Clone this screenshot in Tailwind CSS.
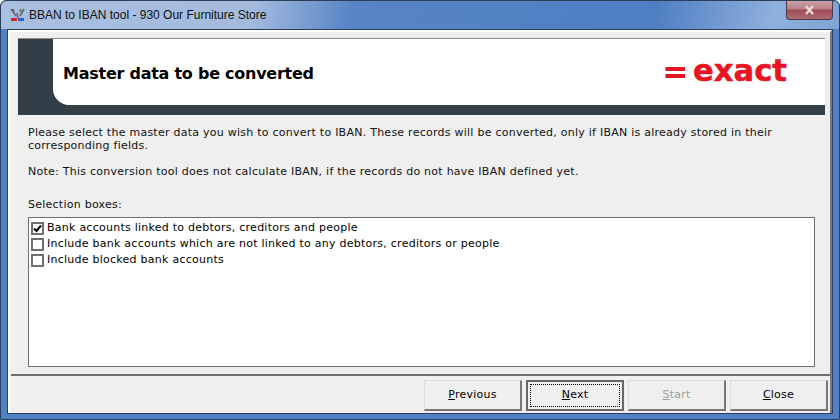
<!DOCTYPE html>
<html lang="en">
<head>
    <meta charset="UTF-8">
    <title>BBAN to IBAN tool</title>
    <script src="https://cdn.jsdelivr.net/npm/@tailwindcss/browser@4"></script>
</head>
<body class="w-[840px] h-[420px] overflow-hidden bg-white font-['DejaVu_Sans',sans-serif] text-[11px] tracking-[0.25px] text-black">
    <!-- Window frame -->
    <div class="relative w-[840px] h-[420px] flex flex-col rounded-t-[6px] border border-[#2c3e5c] bg-[#5180c4]">
        <!-- Title bar -->
        <div class="h-[28px] flex items-center pl-[9px] rounded-t-[6px] bg-[linear-gradient(100deg,#a9bfe0_0%,#a4bbde_30%,#5684c6_42%,#4f7fc3_78%,#8fb0dc_92%,#7ea3d6_100%)]">
            <svg width="15" height="14" viewBox="0 0 15 14" class="shrink-0">
                <path d="M1 1l5 7M3 1l1 3M14 1l-4 7M11 1l-1 3M7 5l1 5" stroke="#666" stroke-width="1.6" fill="none"/>
                <rect x="1" y="10" width="6" height="3" fill="#d8212a"/>
                <rect x="8" y="10" width="6" height="3" fill="#2a62c8"/>
            </svg>
            <span class="ml-[4px] text-[12px] font-['Liberation_Sans',sans-serif] tracking-normal text-[#111]">BBAN to IBAN tool - 930 Our Furniture Store</span>
        </div>
        <!-- Close button -->
        <div class="absolute top-0 right-[6px] w-[47px] h-[19px] rounded-b-[4px] border border-t-0 border-[#4a3a4a] bg-[linear-gradient(#c9a0a4_0%,#b88088_45%,#a04c56_50%,#b06a72_100%)] flex items-center justify-center">
            <svg width="11" height="10" viewBox="0 0 11 10"><path d="M2 1l7 8M9 1L2 9" stroke="#e8dcdc" stroke-width="2.4"/></svg>
        </div>
        <!-- Client area -->
        <div class="flex-1 mx-[6px] mb-[5px] border border-[#2c3e5c] bg-[#efefef] flex flex-col">
            <div class="flex-1 flex flex-col border-l-2 border-t-2 border-r-2 border-l-white border-t-white border-r-[#7a7a7a] pl-[8px] pr-[5px] pt-[6px]">
                <!-- Header banner -->
                <div class="h-[77px] border-t border-[#8a8a8a] bg-[#333f48] pl-[35px] pb-[10px]">
                    <div class="h-full bg-white rounded-bl-[16px] flex items-center justify-between pl-[10px] pr-[34px]">
                        <h1 class="text-[16px] font-bold tracking-[-0.25px] pt-[3px]">Master data to be converted</h1>
                        <svg width="126" height="40" viewBox="0 0 126 40" class="shrink-0">
                            <rect x="0.5" y="15" width="19.5" height="4" fill="#e8141f"/>
                            <rect x="0.5" y="22" width="19.5" height="4" fill="#e8141f"/>
                            <text x="28" y="29" font-family="DejaVu Sans" font-weight="700" font-size="31" textLength="94" lengthAdjust="spacingAndGlyphs" letter-spacing="0" fill="#e8141f" stroke="#e8141f" stroke-width="0.5">exact</text>
                        </svg>
                    </div>
                </div>
                <!-- Intro text -->
                <div class="mx-[10px] mt-[11px] leading-[13px] text-[#111]">
                    <p>Please select the master data you wish to convert to IBAN. These records will be converted, only if IBAN is already stored in their corresponding fields.</p>
                    <p class="mt-[13px]">Note: This conversion tool does not calculate IBAN, if the records do not have IBAN defined yet.</p>
                    <p class="mt-[20px]">Selection boxes:</p>
                </div>
                <!-- Selection list -->
                <div class="mx-[10px] mt-[6px] h-[150px] border border-[#6f6f6f] bg-white pl-[2px] pt-[2px]">
                    <label class="flex items-center h-[16px] gap-[3px]">
                        <span class="w-[13px] h-[13px] border-2 border-[#707070] bg-white flex items-center justify-center">
                            <svg width="9" height="9" viewBox="0 0 9 9"><path d="M1 4.5l2.5 2.5L8 1.5" stroke="#000" stroke-width="2" fill="none"/></svg>
                        </span>
                        Bank accounts linked to debtors, creditors and people
                    </label>
                    <label class="flex items-center h-[16px] gap-[3px]">
                        <span class="w-[13px] h-[13px] border-2 border-[#707070] bg-white"></span>
                        Include bank accounts which are not linked to any debtors, creditors or people
                    </label>
                    <label class="flex items-center h-[16px] gap-[3px]">
                        <span class="w-[13px] h-[13px] border-2 border-[#707070] bg-white"></span>
                        Include blocked bank accounts
                    </label>
                </div>
                <!-- Separator and buttons -->
                <div class="-ml-[7px] -mr-[5px] mt-[7px] border-t-2 border-[#6f6f6f] pt-[4px] flex justify-end gap-[4px] pr-[2px]">
                    <button class="w-[98px] h-[31px] pt-[1px] bg-[#efefef] border border-[#ddd] border-r-2 border-b-2 border-r-[#777] border-b-[#777]"><u>P</u>revious</button>
                    <button class="w-[98px] h-[31px] bg-[#efefef] border-2 border-[#666] p-[2px]"><span class="flex h-full items-center justify-center border border-dotted border-black"><span><u>N</u>ext</span></span></button>
                    <button class="w-[98px] h-[31px] pt-[1px] bg-[#efefef] border border-[#ddd] border-r-2 border-b-2 border-r-[#777] border-b-[#777] text-[#a0a0a0]"><u>S</u>tart</button>
                    <button class="w-[98px] h-[31px] pt-[1px] bg-[#efefef] border border-[#ddd] border-r-2 border-b-2 border-r-[#777] border-b-[#777]"><u>C</u>lose</button>
                </div>
            </div>
        </div>
    </div>
</body>
</html>
